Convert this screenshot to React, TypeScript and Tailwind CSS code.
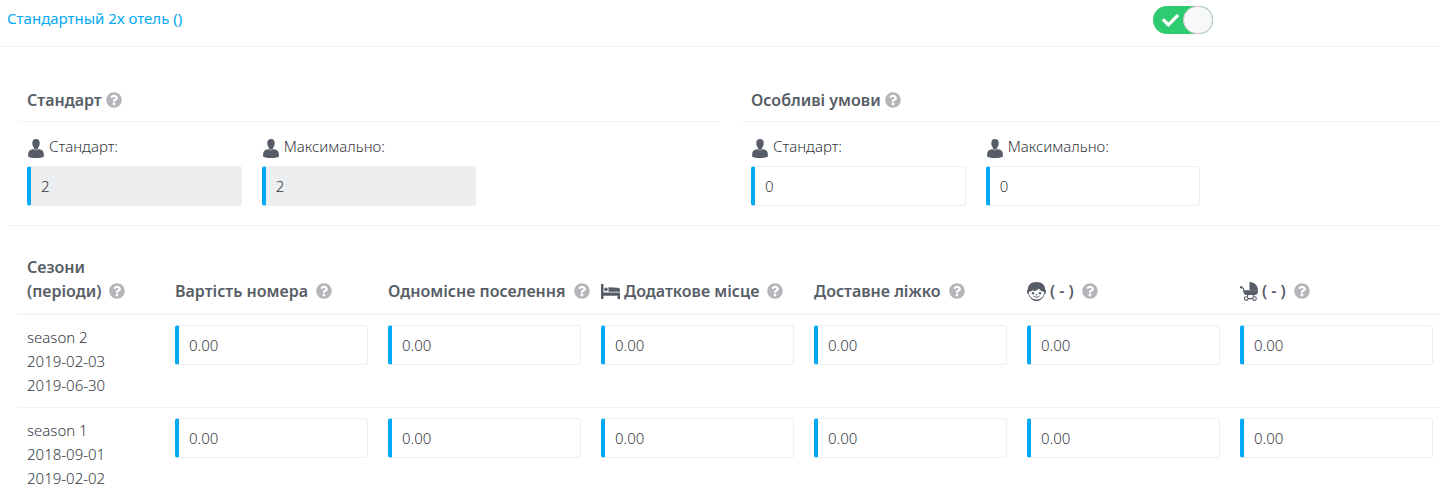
import { useState } from 'react';
import type { ReactNode } from 'react';
import { FaCheck, FaQuestionCircle } from 'react-icons/fa';

const UserIcon = () => (
    <svg width="16" height="19" viewBox="0 0 16 19" fill="currentColor" aria-hidden="true">
        <path d="M8 0C5.600 0 4.300 1.500 4.300 4c0 1.900.6 3.700 1.700 4.700v1L2.500 11C1.300 11.500.5 12.500.3 14L0 17.400C1.800 18.600 5 19 8 19s6.200-.4 8-1.600L15.700 14c-.2-1.500-1-2.500-2.200-3L10 9.700v-1c1.100-1 1.700-2.800 1.700-4.700C11.700 1.500 10.400 0 8 0z" />
        <path d="M4.800 9.800L8 11l3.200-1.200" fill="none" stroke="#fff" strokeWidth=".5" />
    </svg>
);

const BedIcon = () => (
    <svg width="19" height="15" viewBox="0 0 19 15" fill="currentColor" aria-hidden="true">
        <path d="M0 0h2.500v8.500H19V15h-2.500v-3.200h-14V15H0z" />
        <circle cx="5" cy="5.400" r="1.800" />
        <path d="M7.500 3.200l9.300.6c1.300.1 2.200.9 2.200 2.200v1.700H7.500z" />
    </svg>
);

const ChildIcon = () => (
    <svg width="19" height="19" viewBox="0 0 19 19" aria-hidden="true">
        <path d="M9.500 0C4.300 0 1 2.700.8 7.400 0 8-.1 9 .1 10.200c.2 1.100.7 1.900 1.500 2.200C2.900 16.300 5.900 19 9.500 19s6.600-2.700 7.900-6.600c.8-.3 1.300-1.100 1.500-2.200.2-1.200.1-2.200-.7-2.800C18 2.700 14.700 0 9.500 0z" fill="currentColor" />
        <path d="M1.900 9.700c2.200-.3 3.800-1.200 4.600-2.500 0 .8-.2 1.300-.6 1.900 2.700-.1 4.700-1 5.900-2.700 1 1.800 2.800 3 5.300 3.300.2 1.400-.2 2.700-.8 3.900-1.300 2.400-3.900 4-6.800 4s-5.500-1.600-6.800-4C2.100 12.400 1.700 11.100 1.900 9.700z" fill="#fff" />
        <circle cx="6" cy="11.300" r="1.200" fill="currentColor" />
        <circle cx="13" cy="11.300" r="1.200" fill="currentColor" />
        <path d="M7 14.500c1.500 1 3.500 1 5 0M9 12.800h1" fill="none" stroke="currentColor" strokeWidth="1" strokeLinecap="round" />
    </svg>
);

const StrollerIcon = () => (
    <svg width="18" height="19" viewBox="0 0 18 19" fill="currentColor" aria-hidden="true">
        <path d="M9.500 0C14.300 0 18 3.500 18 8.500H9.500z" />
        <path d="M3.300 8.200H18v1.200c0 2.100-1.300 3.600-3.200 3.600H6.500c-1.900 0-3-1.600-3.200-3.600z" />
        <circle cx="1.200" cy="5.300" r="1.200" />
        <path d="M1.300 5.500l1.900.7.9 3M8 13l-1 1.700M13 13l1 1.700M8 16.600h4.700" fill="none" stroke="currentColor" strokeWidth="1.100" />
        <circle cx="6.200" cy="16.600" r="1.800" fill="none" stroke="currentColor" strokeWidth="1.100" />
        <circle cx="14.500" cy="16.600" r="1.800" fill="none" stroke="currentColor" strokeWidth="1.100" />
    </svg>
);

function Help() {
    return (
        <button type="button" aria-label="?" className="shrink-0 text-[#b3b5b9]">
            <FaQuestionCircle size={16} />
        </button>
    );
}

const inputClass =
    "block h-10 w-full rounded-[3px] border border-l-4 border-[#eceeef] border-l-[#03a9f4] bg-white px-2.5 text-[15px] outline-none";

function Field({ id, label, value, disabled }: { id: string; label: string; value: string; disabled?: boolean }) {
    return (
        <div>
            <label htmlFor={id} className="flex h-8 items-start gap-[5px] pl-px">
                <span className="pt-[5px] text-[#575d66]">
                    <UserIcon />
                </span>
                {label}
            </label>
            <input
                id={id}
                type="text"
                defaultValue={value}
                disabled={disabled}
                className={`${inputClass} disabled:bg-[#eceeef]`}
            />
        </div>
    );
}

const groups = [
    { id: 'standard', title: 'Стандарт', value: '2', disabled: true },
    { id: 'special', title: 'Особливі умови', value: '0', disabled: false },
];

const columns: { key: string; title: string; icon?: ReactNode }[] = [
    { key: 'room', title: 'Вартість номера' },
    { key: 'single', title: 'Одномісне поселення' },
    { key: 'extra', title: 'Додаткове місце', icon: <BedIcon /> },
    { key: 'cot', title: 'Доставне ліжко' },
    { key: 'child', title: '( - )', icon: <ChildIcon /> },
    { key: 'baby', title: '( - )', icon: <StrollerIcon /> },
];

const seasons = [
    { name: 'season 2', from: '2019-02-03', to: '2019-06-30' },
    { name: 'season 1', from: '2018-09-01', to: '2019-02-02' },
];

export default function App() {
    const [enabled, setEnabled] = useState(true);

    return (
        <div className="w-full overflow-x-clip bg-white font-['Noto_Sans','Open_Sans',sans-serif] text-[15px] leading-6 font-light text-[#33373e]">
            <header className="grid h-[47px] grid-cols-5 border-b border-[#f3f4f5]">
                <div className="col-span-4 pt-1.5 pl-[7px]">
                    <a href="#hotel" className="font-normal text-[#03a9f4]">Стандартный 2х отель ()</a>
                </div>
                <label className="mt-1.5 ml-px flex h-7 w-[60px] cursor-pointer self-start overflow-hidden rounded-full bg-[#2ecc71]">
                    <input
                        type="checkbox"
                        aria-label="Стандартный 2х отель"
                        checked={enabled}
                        onChange={() => setEnabled(!enabled)}
                        className="sr-only"
                    />
                    <span className="flex flex-1 items-center justify-center pl-1 text-white">
                        <FaCheck size={17} />
                    </span>
                    <span className="h-7 w-[30px] rounded-full border border-[#e3c9cb] bg-[#f7f8fa]" />
                </label>
            </header>

            <section className="ml-2 border-b border-[#f3f4f5] pt-8 pb-[19px] pl-[9px]">
                <div className="-mr-[5px] grid grid-cols-2 gap-5">
                    {groups.map((group) => (
                        <div key={group.id}>
                            <h2 className="flex h-[43px] items-center gap-1 border-b border-[#f3f4f5] px-2.5 text-base font-semibold text-[#575d66]">
                                {group.title}
                                <Help />
                            </h2>
                            <div className="grid grid-cols-3 gap-5 px-2.5 pt-3">
                                <Field id={`${group.id}-base`} label="Стандарт:" value={group.value} disabled={group.disabled} />
                                <Field id={`${group.id}-max`} label="Максимально:" value={group.value} disabled={group.disabled} />
                            </div>
                        </div>
                    ))}
                </div>
            </section>

            <section className="-mr-[3px] pt-[29px] pl-[17px]">
                <table className="w-full table-fixed border-collapse text-left">
                    <thead className="text-base text-[#575d66]">
                        <tr className="border-b-2 border-[#f3f4f5] align-bottom">
                            <th className="w-[148px] px-2.5 pb-2.5 font-semibold">
                                Сезони
                                <span className="flex items-center gap-2">
                                    (періоди)
                                    <Help />
                                </span>
                            </th>
                            {columns.map((column) => (
                                <th key={column.key} className="px-2.5 pb-2.5 font-semibold">
                                    <span className="flex items-center gap-2 whitespace-nowrap">
                                        <span className="flex items-center gap-1">
                                            {column.icon}
                                            {column.title}
                                        </span>
                                        <Help />
                                    </span>
                                </th>
                            ))}
                        </tr>
                    </thead>
                    <tbody>
                        {seasons.map((season) => (
                            <tr key={season.name} className="border-b border-[#f3f4f5] align-top">
                                <td className="px-2.5 pt-2.5 pb-2.5">
                                    <div>{season.name}</div>
                                    <div>{season.from}</div>
                                    <div>{season.to}</div>
                                </td>
                                {columns.map((column) => (
                                    <td key={column.key} className="px-2.5 pt-2.5">
                                        <input
                                            type="text"
                                            aria-label={`${column.title} ${season.name}`}
                                            defaultValue="0.00"
                                            className={inputClass}
                                        />
                                    </td>
                                ))}
                            </tr>
                        ))}
                    </tbody>
                </table>
            </section>
        </div>
    );
}
